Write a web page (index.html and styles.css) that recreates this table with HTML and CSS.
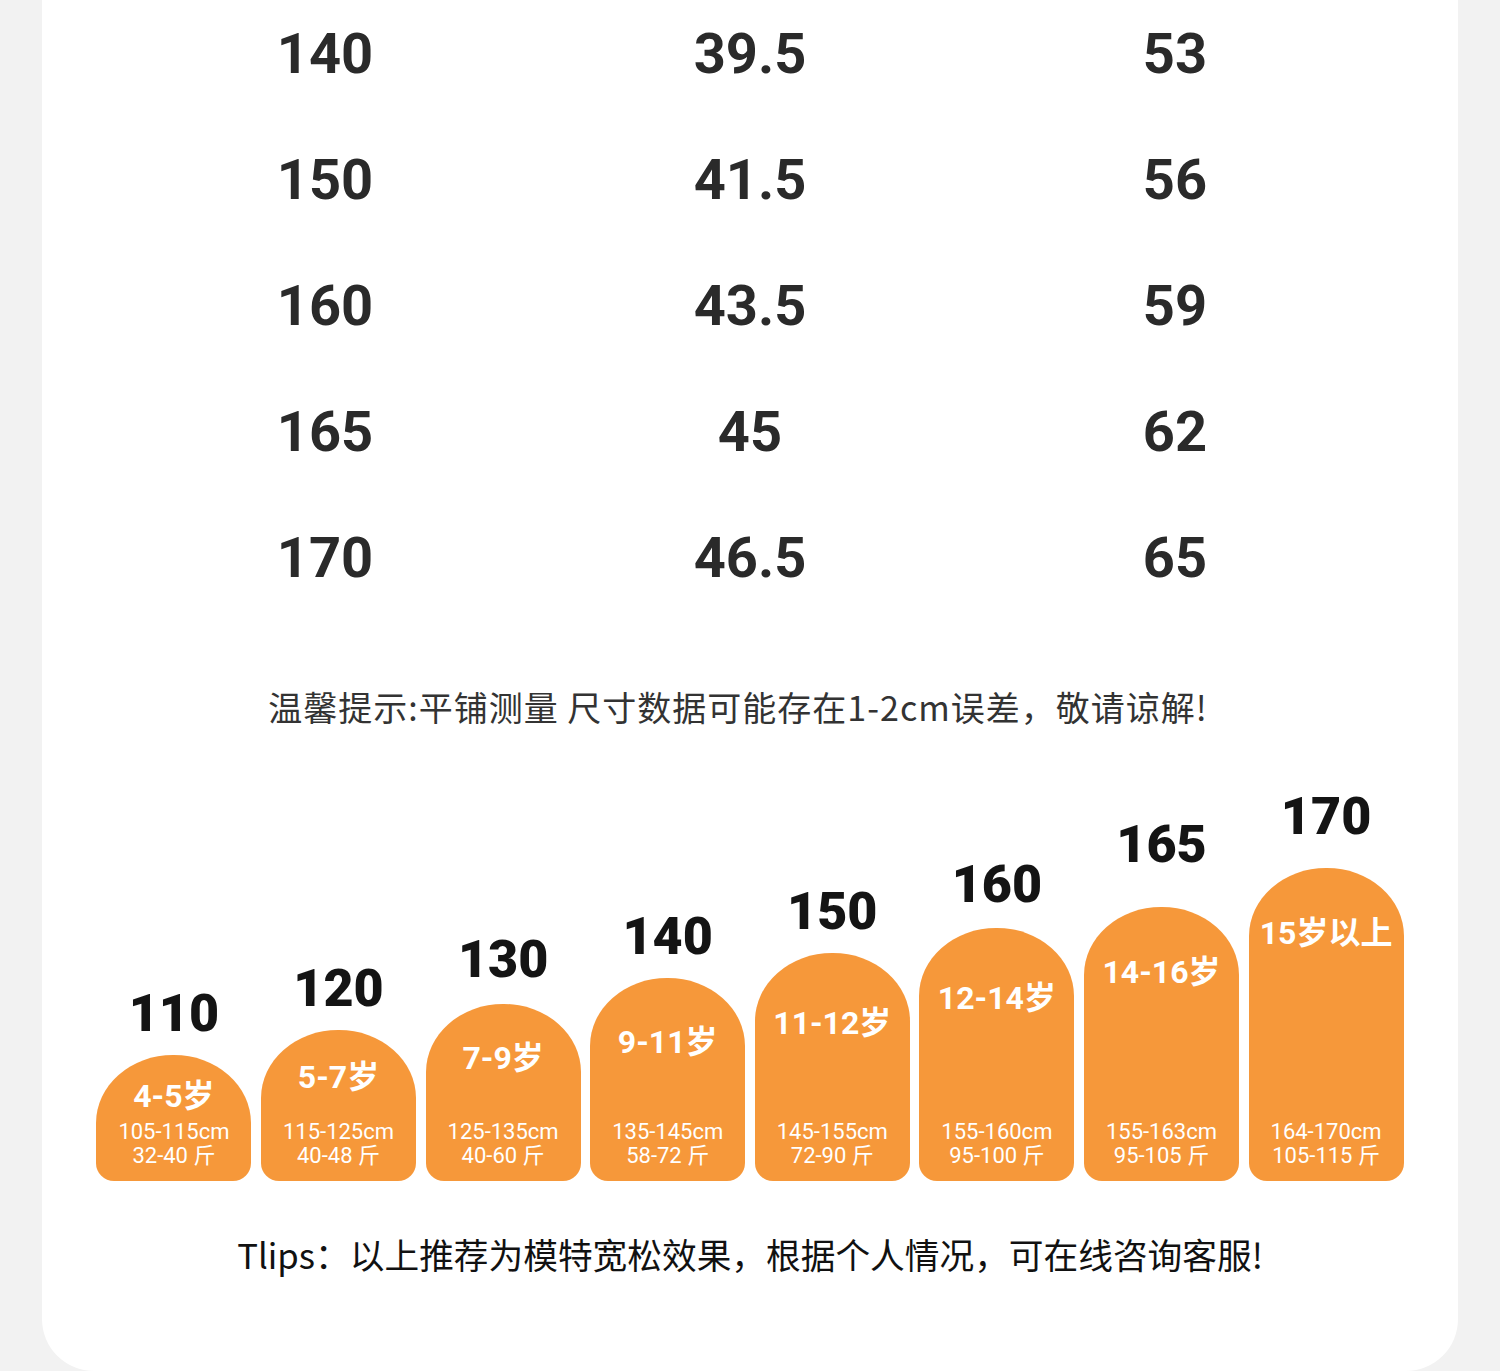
FILE: index.html
```html
<!DOCTYPE html>
<html lang="zh-CN">
<head>
<meta charset="utf-8">
<title>尺码表</title>
<link rel="stylesheet" href="styles.css">
</head>
<body>
<div class="card">
  <div class="size-table">
    <div class="row"><span>140</span><span>39.5</span><span>53</span></div>
    <div class="row"><span>150</span><span>41.5</span><span>56</span></div>
    <div class="row"><span>160</span><span>43.5</span><span>59</span></div>
    <div class="row"><span>165</span><span>45</span><span>62</span></div>
    <div class="row"><span>170</span><span>46.5</span><span>65</span></div>
  </div>

  <p class="tip">温馨提示:平铺测量 尺寸数据可能存在1-2cm误差，敬请谅解!</p>

  <div class="chart">
    <div class="col c1">
      <div class="height">110</div>
      <div class="arch"><div class="age">4-5岁</div><div class="range">105-115cm<br>32-40 斤</div></div>
    </div>
    <div class="col c2">
      <div class="height">120</div>
      <div class="arch"><div class="age">5-7岁</div><div class="range">115-125cm<br>40-48 斤</div></div>
    </div>
    <div class="col c3">
      <div class="height">130</div>
      <div class="arch"><div class="age">7-9岁</div><div class="range">125-135cm<br>40-60 斤</div></div>
    </div>
    <div class="col c4">
      <div class="height">140</div>
      <div class="arch"><div class="age">9-11岁</div><div class="range">135-145cm<br>58-72 斤</div></div>
    </div>
    <div class="col c5">
      <div class="height">150</div>
      <div class="arch"><div class="age">11-12岁</div><div class="range">145-155cm<br>72-90 斤</div></div>
    </div>
    <div class="col c6">
      <div class="height">160</div>
      <div class="arch"><div class="age">12-14岁</div><div class="range">155-160cm<br>95-100 斤</div></div>
    </div>
    <div class="col c7">
      <div class="height">165</div>
      <div class="arch"><div class="age">14-16岁</div><div class="range">155-163cm<br>95-105 斤</div></div>
    </div>
    <div class="col c8">
      <div class="height">170</div>
      <div class="arch"><div class="age">15岁以上</div><div class="range">164-170cm<br>105-115 斤</div></div>
    </div>
  </div>

  <p class="tlips">Tlips：以上推荐为模特宽松效果，根据个人情况，可在线咨询客服!</p>
</div>
</body>
</html>
```

FILE: styles.css
```css
html, body {
  margin: 0;
  padding: 0;
}

body {
  background: #f2f2f2;
  font-family: Roboto, "Noto Sans CJK SC", sans-serif;
  overflow: hidden;
}

.card {
  display: flex;
  flex-direction: column;
  box-sizing: border-box;
  width: 1416px;
  height: 1371px;
  margin: 0 42px;
  background: #ffffff;
  border-radius: 0 0 52px 52px;
  overflow: hidden;
}

/* ---------- size table ---------- */
.size-table {
  margin-top: -9px;
}

.row {
  display: grid;
  grid-template-columns: repeat(3, 425px);
  justify-content: center;
  height: 126px;
  align-items: center;
}

.row span {
  text-align: center;
  font-family: Roboto, sans-serif;
  font-weight: 700;
  font-size: 56px;
  line-height: 126px;
  color: #2a2a2a;
}

/* ---------- tips ---------- */
.tip {
  margin: 61px 0 0;
  padding-right: 24px;
  text-align: center;
  font-family: "Noto Sans CJK SC", sans-serif;
  font-size: 34px;
  line-height: 50px;
  letter-spacing: 1px;
  color: #333333;
}

.tlips {
  margin: 48px 0 0;
  text-align: center;
  font-family: "Noto Sans CJK SC", sans-serif;
  font-size: 34.7px;
  line-height: 50px;
  color: #111111;
}

/* ---------- chart ---------- */
.chart {
  display: flex;
  justify-content: center;
  align-items: flex-end;
  gap: 9.6px;
  height: 449px;
}

.col {
  width: 155px;
  display: flex;
  flex-direction: column;
  align-items: center;
}

.height {
  font-family: Roboto, sans-serif;
  font-weight: 900;
  font-size: 52px;
  line-height: 52px;
  color: #141414;
  margin-bottom: 15px;
}

.arch {
  box-sizing: border-box;
  width: 155px;
  display: flex;
  flex-direction: column;
  align-items: center;
  background: #f6983a;
  color: #ffffff;
  border-radius: 77px 77px 18px 18px / 68px 68px 18px 18px;
  padding-bottom: 13px;
}

.age {
  font-family: Roboto, "Noto Sans CJK SC", sans-serif;
  font-weight: 700;
  font-size: 32px;
  line-height: 38px;
  white-space: nowrap;
}

.range {
  margin-top: auto;
  text-align: center;
  font-family: Roboto, "Noto Sans CJK SC", sans-serif;
  font-size: 22px;
  line-height: 24px;
  white-space: nowrap;
}

.c1 .arch { height: 126px; padding-top: 22px; }
.c2 .arch { height: 151px; padding-top: 28px; }
.c3 .arch { height: 177px; padding-top: 35px; }
.c4 .arch { height: 203px; padding-top: 45px; }
.c5 .arch { height: 228px; padding-top: 51px; }
.c6 .arch { height: 253px; padding-top: 51px; }
.c7 .arch { height: 274px; padding-top: 46px; }
.c8 .arch { height: 313px; padding-top: 46px; }

.c3 .height { margin-bottom: 18px; }
.c6 .height { margin-bottom: 17px; }
.c7 .height { margin-bottom: 36px; }
.c8 .height { margin-bottom: 25px; }
```
